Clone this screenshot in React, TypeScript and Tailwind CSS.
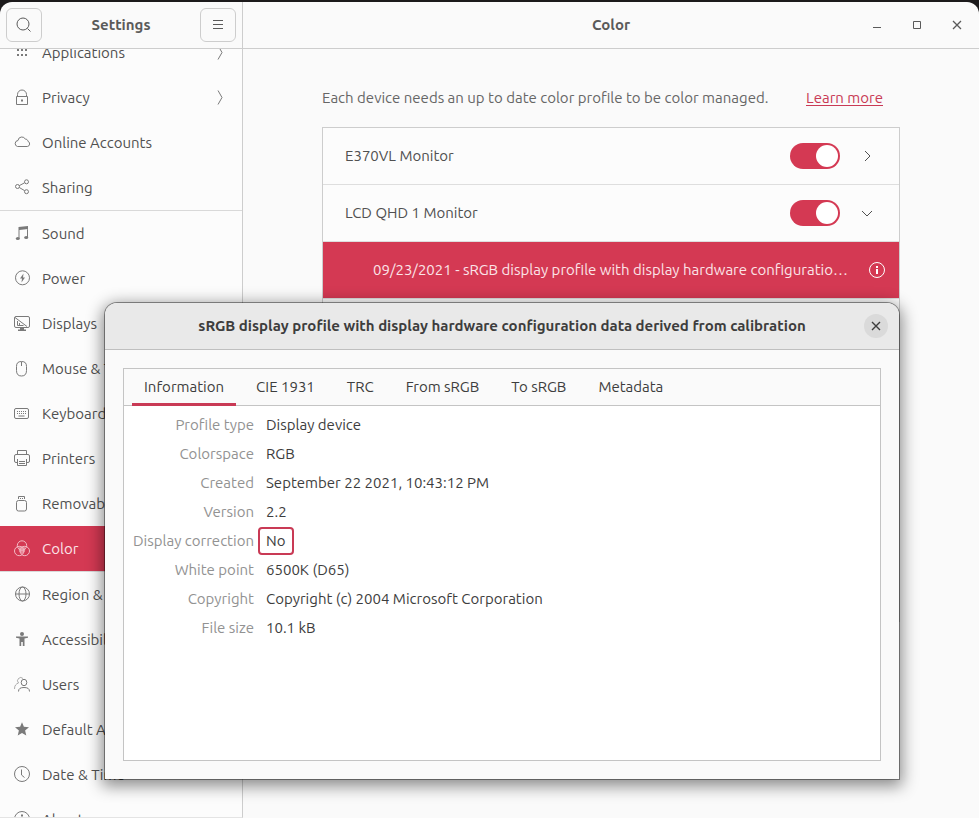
import { useState, type ReactNode } from 'react'

interface NavItem {
  label: string
  icon: ReactNode
  submenu?: boolean
  divider?: boolean
}

function Icon({ children }: { children: ReactNode }) {
  return (
    <svg
      viewBox="0 0 16 16"
      className="h-4 w-4 shrink-0 overflow-visible"
      fill="none"
      stroke="currentColor"
      strokeWidth="1"
      aria-hidden="true"
    >
      {children}
    </svg>
  )
}

const NAV: NavItem[] = [
  {
    label: 'Applications',
    submenu: true,
    icon: (
      <g fill="currentColor" stroke="none">
        {[2, 7, 12].map((y) => [3, 7, 11].map((x) => <rect key={`${x}-${y}`} x={x} y={y - 3} width="2" height="2" />))}
      </g>
    ),
  },
  {
    label: 'Privacy',
    submenu: true,
    icon: (
      <>
        <path d="M2.500 6.500h11v8h-11zM3.500 6.500V4.500a4.500 4.500 0 0 1 9 0v2" />
        <rect x="7" y="9.500" width="2" height="2" fill="currentColor" stroke="none" />
      </>
    ),
  },
  {
    label: 'Online Accounts',
    icon: <path d="M3.500 11.500h9.800a2.700 2.700 0 0 0 .6-5.200c-.2-1.600-1.300-2.300-2.500-2.100A3.900 3.900 0 0 0 4 5.500 3.050 3.050 0 0 0 3.500 11.500z" />,
  },
  {
    label: 'Sharing',
    icon: (
      <>
        <circle cx="3.500" cy="6.500" r="2" />
        <circle cx="12.500" cy="1.800" r="2" />
        <circle cx="12.500" cy="11.700" r="2" />
        <path d="M5.300 5.600l5.300-2.800M5.300 7.500l5.400 3.200" />
      </>
    ),
  },
  {
    label: 'Sound',
    divider: true,
    icon: (
      <g fill="currentColor" stroke="none">
        <path d="M4.500 1L14 0v3L5.500 4v8.500h-1z M13 1h1v11h-1z" />
        <ellipse cx="3.800" cy="12.500" rx="2" ry="1.600" />
        <ellipse cx="12.200" cy="11.500" rx="2" ry="1.600" />
      </g>
    ),
  },
  {
    label: 'Power',
    icon: (
      <>
        <circle cx="8.500" cy="6.800" r="7" />
        <path d="M9.500 2.500L6 7.500h2L7.500 11.500l3.500-5H9z" fill="currentColor" stroke="none" />
      </>
    ),
  },
  {
    label: 'Displays',
    icon: (
      <>
        <rect x=".5" y=".5" width="15" height="11" rx="1.500" />
        <path d="M1 1.500l12 9M3.500 5v4.500h6M5.500 7v2.500" />
        <path d="M6 12h4v1.500h2V15H4v-1.500h2z" fill="currentColor" stroke="none" />
      </>
    ),
  },
  {
    label: 'Mouse & Touchpad',
    icon: <path d="M2.500 5.500c0-3.500 1.500-5 5-5s5 1.500 5 5v4c0 3.500-1.500 5.500-5 5.500s-5-2-5-5.500zM7.500 1v4" />,
  },
  {
    label: 'Keyboard',
    icon: (
      <>
        <rect x=".5" y="2.500" width="14" height="10" rx="1.500" />
        <path d="M3 5.500h10M3 7.500h10" strokeDasharray="1 1" />
        <path d="M4.500 10h6" />
      </>
    ),
  },
  {
    label: 'Printers',
    icon: (
      <>
        <path d="M3.500 3.500v-4h9v4M3 11.500H2A1.500 1.500 0 0 1 .5 10V5A1.500 1.500 0 0 1 2 3.500h12A1.500 1.500 0 0 1 15.500 5v5a1.500 1.500 0 0 1-1.500 1.500h-1" />
        <path d="M3.500 8v6.500h9V8M5 10.500h6M5 12.500h6" />
      </>
    ),
  },
  {
    label: 'Removable Media',
    icon: (
      <>
        <rect x="2.500" y="4.500" width="10" height="10.500" rx="2" />
        <path d="M4.500 3V.5h6V3M6.500 2v1M8.500 2v1" />
      </>
    ),
  },
  {
    label: 'Color',
    icon: (
      <>
        <path d="M8 5l3.500 1.500-.5 4L8 13l-3-2.500-.5-4z" fill="currentColor" fillOpacity=".6" stroke="none" />
        <circle cx="8" cy="4.500" r="4.700" />
        <circle cx="5.200" cy="10" r="4.700" />
        <circle cx="10.800" cy="10" r="4.700" />
      </>
    ),
  },
  {
    label: 'Region & Language',
    divider: true,
    icon: (
      <>
        <circle cx="8.500" cy="7" r="7" />
        <ellipse cx="8.500" cy="7" rx="3.500" ry="7" />
        <path d="M1.500 7h14" />
      </>
    ),
  },
  {
    label: 'Accessibility',
    icon: (
      <g fill="currentColor" stroke="none">
        <circle cx="8" cy="2" r="2" />
        <path d="M2 4.500h12v1.200l-3.500.8V14H8.800v-4H7.200v4H5.500V6.500L2 5.700z" />
      </g>
    ),
  },
  {
    label: 'Users',
    icon: (
      <>
        <path d="M9 1.500A2.800 2.800 0 1 0 4.500 6C2 7 .5 8.300.5 12" opacity=".6" />
        <ellipse cx="10" cy="5.500" rx="2.800" ry="3.200" />
        <path d="M4.500 14.500c0-3 2-4 5.500-4s5.500 1 5.500 4" />
      </>
    ),
  },
  {
    label: 'Default Applications',
    icon: <path d="M8 .2l1.900 4.600 5.100.4-3.900 3.300 1.200 5L8 10.900l-4.300 2.600 1.200-5L1 5.200l5.100-.4z" fill="currentColor" stroke="none" />,
  },
  {
    label: 'Date & Time',
    icon: (
      <>
        <circle cx="8" cy="7" r="7.500" />
        <path d="M7.500 2.500v5.500l3 2.500" />
      </>
    ),
  },
  {
    label: 'About',
    icon: (
      <>
        <circle cx="8" cy="7" r="7.500" />
        <path d="M7 2.500h2v2H7zM7 6h2v5H7z" fill="currentColor" stroke="none" />
      </>
    ),
  },
]

const TABS = ['Information', 'CIE 1931', 'TRC', 'From sRGB', 'To sRGB', 'Metadata']

const DETAILS: [string, string][] = [
  ['Profile type', 'Display device'],
  ['Colorspace', 'RGB'],
  ['Created', 'September 22 2021, 10:43:12 PM'],
  ['Version', '2.2'],
  ['Display correction', 'No'],
  ['White point', '6500K (D65)'],
  ['Copyright', 'Copyright (c) 2004 Microsoft Corporation'],
  ['File size', '10.1 kB'],
]

function Sidebar() {
  return (
    <nav className="w-[243px] shrink-0 overflow-hidden border-r border-b border-r-[#cdcdcd] border-b-[#e4e4e4] bg-[#fcfcfc]" aria-label="Settings panels">
      {/* list is scrolled a little, so the first row is cut by the header */}
      <ul className="-mt-[19px]">
        {NAV.map((item) => {
          const active = item.label === 'Color'
          return (
            <li key={item.label} className={item.divider ? 'border-t border-[#d9d9d9]' : ''}>
              <button
                className={`flex h-[45px] w-full items-center gap-3 px-3.5 text-left whitespace-nowrap ${
                  active ? 'bg-[#d43953] text-[#f3b9c3]' : 'text-[#7a7a7a]'
                }`}
              >
                <Icon>{item.icon}</Icon>
                <span className={`flex-1 ${active ? 'text-[#fbe4e8]' : 'text-[#505050]'}`}>{item.label}</span>
                {item.submenu && (
                  <Icon>
                    <path d="M6 .5l4 7-4 7" />
                  </Icon>
                )}
              </button>
            </li>
          )
        })}
      </ul>
    </nav>
  )
}

function DeviceRow({ name, open }: { name: string; open?: boolean }) {
  const [on, setOn] = useState(true)
  return (
    <li className="flex h-[57px] items-center border-b border-[#dedede] pr-5 pl-[22px]">
      <span className="flex-1">{name}</span>
      <input
        type="checkbox"
        role="switch"
        aria-label={name}
        checked={on}
        onChange={(e) => setOn(e.target.checked)}
        className="flex h-[26px] w-[50px] appearance-none items-center rounded-full bg-[#c8c8c8] p-0.5 before:h-[22px] before:w-[22px] before:rounded-full before:bg-white checked:justify-end checked:bg-[#d43953]"
      />
      <button className="ml-[15px] flex h-6 w-6 items-center justify-center" aria-label={`Profiles of ${name}`}>
        <Icon>{open ? <path d="M3 6l5 5 5-5" /> : <path d="M6 3l5 5-5 5" />}</Icon>
      </button>
    </li>
  )
}

function ProfileDialog() {
  const [tab, setTab] = useState('Information')
  return (
    <div
      role="dialog"
      aria-labelledby="profile-title"
      className="absolute top-[303px] right-20 bottom-[39px] left-[105px] flex flex-col rounded-t-xl bg-[#fafafa] text-[#3d3d3d] shadow-[0_0_0_1px_rgba(0,0,0,0.4),0_4px_16px_3px_rgba(0,0,0,0.45)]"
    >
      <div className="flex h-[47px] shrink-0 items-center rounded-t-xl border-b border-[#bfbfbf] bg-[#e9e9e9] px-[11px]">
        <h2 id="profile-title" className="flex-1 pl-6 text-center font-bold whitespace-nowrap">
          sRGB display profile with display hardware configuration data derived from calibration
        </h2>
        <button className="flex h-6 w-6 items-center justify-center rounded-full bg-[#dadada]" aria-label="Close dialog">
          <Icon>
            <path d="M4 4l8 8M12 4l-8 8" strokeWidth="1.400" />
          </Icon>
        </button>
      </div>
      <div className="m-[18px] flex flex-1 flex-col border border-[#c4c4c4] bg-white">
        <div role="tablist" className="flex h-[37px] shrink-0 gap-2 border-b border-[#c4c4c4] bg-[#fafafa] pl-2">
          {TABS.map((name) => (
            <button
              key={name}
              role="tab"
              aria-selected={tab === name}
              onClick={() => setTab(name)}
              className={`-mb-px border-b-[3px] px-3 pt-0.5 whitespace-nowrap ${tab === name ? 'border-[#c93a55]' : 'border-transparent'}`}
            >
              {name}
            </button>
          ))}
        </div>
        <table className="mt-1 ml-2 self-start">
          <tbody>
            {DETAILS.map(([label, value]) => (
              <tr key={label} className="h-[29px]">
                <th scope="row" className="w-[122px] p-0 text-right font-normal whitespace-nowrap text-[#929292]">
                  {label}
                </th>
                <td className="py-0 pl-3">
                  {label === 'Display correction' ? (
                    <span className="-ml-2 inline-flex h-7 items-center rounded border-2 border-[#c93a55] px-1.5 align-middle">{value}</span>
                  ) : (
                    value
                  )}
                </td>
              </tr>
            ))}
          </tbody>
        </table>
      </div>
    </div>
  )
}

export default function App() {
  return (
    <div className="relative h-screen overflow-hidden bg-[#1c1a1b] pt-0.5 font-['Ubuntu','Noto_Sans',sans-serif] text-[15px] leading-5 text-[#505050]">
      <div className="flex h-full flex-col overflow-hidden rounded-t-xl bg-[#fafafa]">
        <header className="flex h-[47px] shrink-0 border-b border-[#cdcdcd] text-[#5a5a5a]">
          <div className="flex w-[243px] shrink-0 items-center border-r border-[#cdcdcd] px-1.5">
            <button className="flex h-[34px] w-9 items-center justify-center rounded-md border border-[#cdcdcd]" aria-label="Search">
              <Icon>
                <circle cx="7" cy="7" r="6" />
                <path d="M11.500 11.500l3 3" />
              </Icon>
            </button>
            <h1 className="flex-1 text-center font-bold">Settings</h1>
            <button className="flex h-[34px] w-9 items-center justify-center rounded-md border border-[#cdcdcd]" aria-label="Menu">
              <Icon>
                <path d="M3 3.500h10M3 7.500h10M3 11.500h10" />
              </Icon>
            </button>
          </div>
          <div className="flex flex-1 items-center pr-2.5">
            <div className="w-[114px]" />
            <h1 className="flex-1 text-center font-bold">Color</h1>
            <div className="flex gap-4">
              <button className="flex h-6 w-6 items-center justify-center" aria-label="Minimize">
                <Icon>
                  <path d="M4 10.500h8" />
                </Icon>
              </button>
              <button className="flex h-6 w-6 items-center justify-center" aria-label="Maximize">
                <Icon>
                  <path d="M4.500 4.500h7v7h-7z" />
                </Icon>
              </button>
              <button className="flex h-6 w-6 items-center justify-center" aria-label="Close">
                <Icon>
                  <path d="M4 4l8 8M12 4l-8 8" strokeWidth="1.300" />
                </Icon>
              </button>
            </div>
          </div>
        </header>

        <div className="flex min-h-0 flex-1">
          <Sidebar />
          <main className="min-w-0 flex-1 px-[79px] pt-[38px]">
            <div className="flex items-center justify-between pr-[17px] text-[#666]">
              <p className="leading-[22px]">Each device needs an up to date color profile to be color managed.</p>
              <a href="#learn" className="text-[#c93a55] underline underline-offset-2">
                Learn more
              </a>
            </div>
            <ul className="mt-[18px] h-[495px] border border-[#cdcdcd] bg-[#fcfcfc]">
              <DeviceRow name="E370VL Monitor" />
              <DeviceRow name="LCD QHD 1 Monitor" open />
              <li className="flex h-[57px] items-center border-b border-[#dedede] bg-[#d43953] pr-3.5 pl-[50px] text-[#fbe4e8]">
                <span className="w-0 flex-1 truncate">
                  09/23/2021 - sRGB display profile with display hardware configuration data derived from calibration
                </span>
                <button className="ml-5 text-white" aria-label="Profile details">
                  <Icon>
                    <circle cx="8" cy="8" r="7.500" />
                    <path d="M7 4h2v2H7zM7 7h2v5H7z" fill="currentColor" stroke="none" />
                  </Icon>
                </button>
              </li>
            </ul>
          </main>
        </div>
      </div>
      <ProfileDialog />
    </div>
  )
}
